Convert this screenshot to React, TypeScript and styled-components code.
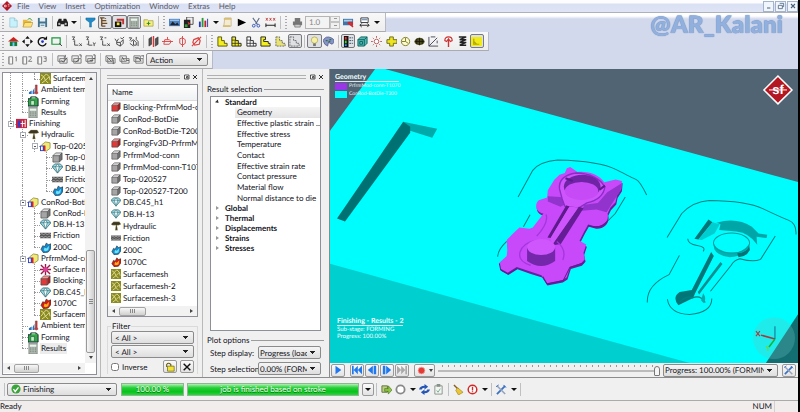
import React from 'react';
import styled, { createGlobalStyle, css } from 'styled-components';

const GlobalStyle = createGlobalStyle`
  *, *::before, *::after { box-sizing: border-box; }
  html, body, #root { height: 100%; }
  body {
    margin: 0;
    background: #f0f0f0;
    color: #14141c;
    font: 8px/10px Lato, "Open Sans", sans-serif;
    text-rendering: geometricPrecision;
    overflow: hidden;
  }
  button, select, input { font: inherit; color: inherit; margin: 0; text-rendering: inherit; }
  ul { list-style: none; margin: 0; padding: 0; }
`;

/* ---------- icons ---------- */

const cube = (top: string, front: string, side: string) => (
  <>
    <path d="M1 4l3-3h7l-3 3z" fill={top} />
    <path d="M1 4h7v7H1z" fill={front} />
    <path d="M8 4l3-3v7l-3 3z" fill={side} />
    <path d="M1 4l3-3h7v7l-3 3H1zM1 4h7v7M8 4l3-3" fill="none" stroke="#444" strokeWidth=".7" />
  </>
);

const die = (top: string) => (
  <>
    <path d="M2 4l4-3 5 1v6l-4 3-5-1z" fill={top} stroke="#77721c" strokeWidth=".7" />
    <path d="M0 5h5v6H0z" fill="#2b3fc8" />
    <path d="M1 6h2v4H1z" fill="#fff" />
    <path d="M4 5h2v6H4z" fill="#d2262c" />
  </>
);

const flame = (a: string, b: string) => (
  <>
    <path d="M1 8l2-4 2 1 2-4 2 2 3-1v5l-3 4-5 1z" fill={a} stroke="#222" strokeWidth=".6" />
    <path d="M4 9l1-3 2 1 3-3-1 5-3 1z" fill={b} />
  </>
);

const stairs = (fill: string, stroke: string, grid?: boolean) => (
  <>
    <path d="M1 1h4v4h3v3h3v3H1z" fill={fill} stroke={stroke} />
    {grid && <path d="M1 4.500h4M1 8h7M4.500 5v6M8 8v3" stroke={stroke} strokeWidth=".8" />}
  </>
);

const axes = (a: string, b: string) => (
  <>
    <path d="M1 1h3L2 4h2M4 5v5h4" fill="none" stroke="#333" strokeWidth=".9" />
    <path d={a} fill="none" stroke="#333" strokeWidth=".9" />
    <path d={b} fill="none" stroke="#333" strokeWidth=".9" />
  </>
);

const pane = (mark: string) => (
  <>
    <path d="M1 3h4v8H1zM1 3v8M5 3v8" fill="#f6f6f6" stroke="#888" />
    <path d={mark} fill="none" stroke="#777" />
  </>
);

const stack = (mark: string) => (
  <>
    <path d="M1 2h7v6H1zM3 5h8v5H3z" fill="#eee" stroke="#777" />
    <path d={mark} fill="none" stroke="#555" />
  </>
);

const glyphs: Record<string, React.ReactNode> = {
  file: <path d="M2 1h5l3 3v7H2zM7 1v3h3" fill="#c8f2fb" stroke="#8fc4d4" strokeWidth=".8" />,
  open: <><path d="M1 3h4l1 1h4v7H1z" fill="#e8b93c" /><path d="M3 6h9l-2 5H1z" fill="#ffe27a" stroke="#a98222" strokeWidth=".6" /><path d="M6 3q3-3 5 1" fill="none" stroke="#3a9a3a" /></>,
  save: <><path d="M1 1h10v10H1z" fill="#43758e" /><path d="M3 1h6v4H3zM3 7h6v4H3z" fill="#e5eff4" /><path d="M4 9h4" stroke="#43758e" /></>,
  find: <><path d="M2 2h3v2h2V2h3l2 4v4H8V8H4v2H0V6z" fill="#222" /><circle cx="2.500" cy="7.500" r="1.200" fill="#bbb" /><circle cx="9.500" cy="7.500" r="1.200" fill="#bbb" /></>,
  filter: <path d="M1 1h10v2L7 6v5H5V6L1 3z" fill="#1f8cc9" stroke="#0c5f92" strokeWidth=".5" />,
  tree: <path d="M1 1h5M3 1v9M3 4h5M3 7h6M3 10h4M7 1v1" stroke="#6d4a22" strokeWidth="1.500" />,
  objects: <><path d="M1 5h7v6H1z" fill="#111" /><path d="M3 2h8v6H9V4H3z" fill="#c03030" /><path d="M3 6h3v3H3z" fill="#f3e23a" /></>,
  calc: <><path d="M1 0h9v12H1z" fill="#b4bab4" stroke="#6c7a70" strokeWidth=".8" /><path d="M2 2h7v2H2z" fill="#e8f7ea" /><path d="M3 5v6M5.500 5v6M8 5v6" stroke="#55725c" strokeDasharray="1 1" /></>,
  folderAdd: <><path d="M1 3h4l1 1h5v6H1z" fill="#f5ee7c" stroke="#9a9434" strokeWidth=".7" /><path d="M6 5v4M4 7h4" stroke="#258a25" /></>,
  picture: <><path d="M0 2h12v8H0z" fill="#4d82c4" /><path d="M1 9l3-4 3 3 2-2 2 3z" fill="#222" /><path d="M1 3h10v1H1z" fill="#bfe0f7" /></>,
  layers: <><path d="M4 0h7v8H4z" fill="#eee" stroke="#222" strokeWidth=".8" /><path d="M1 3h7v9H1z" fill="#222" /><path d="M2 8h3v3H2z" fill="#35a035" /><path d="M5 5l3 2-2 2z" fill="#d33" /></>,
  chart: <><path d="M1 5h2v6H1z" fill="#2338c0" /><path d="M4 1h2v10H4z" fill="#2a9a3a" /><path d="M7 4h2v7H7z" fill="#c02323" /><path d="M10 2h1v9h-1z" fill="#2338c0" /></>,
  scroll: <><path d="M3 1h7v9H2z" fill="#f4ecd2" stroke="#b5a774" strokeWidth=".7" /><path d="M2 1h8v2H2zM1 9h8v2H1z" fill="#d9bd70" /></>,
  run: <path d="M2 2l9 4-9 4z" fill="#000" />,
  cut: <><path d="M2 1l5 7M9 1L5 8" stroke="#5a6b88" strokeWidth="1.200" /><circle cx="3" cy="9.500" r="1.500" fill="none" stroke="#2d4fc0" /><circle cx="8" cy="9.500" r="1.500" fill="none" stroke="#2d4fc0" /></>,
  measure: <><path d="M1 7v4M11 7v4M1 9h10" stroke="#111" /><path d="M1 1l2 3M3 1L1 4M5 1l2 3M7 1L5 4M9 1l2 3M11 1L9 4" stroke="#b22" strokeWidth=".8" /></>,
  print: <><path d="M3 1h6v4H3zM1 5h10v4H1z" fill="#777" /><path d="M3 8h6v3H3z" fill="#ccc" stroke="#666" strokeWidth=".7" /></>,
  snapshot: <><path d="M0 2h11v7H0z" fill="#3f75a8" /><path d="M1 3h9v2H1z" fill="#a8d0ee" /><path d="M5 6l6 5M6 6h4v4" stroke="#d22" strokeWidth="1.500" fill="none" /></>,
  fit: <><path d="M2 1h8v5H2z" fill="#fff" stroke="#333" /><path d="M3 3h6" stroke="#3a6fb0" /><path d="M1 9h10M3 7L1 9l2 2M9 7l2 2-2 2" stroke="#222" fill="none" /></>,
  home: <><path d="M0 6l6-5 6 5z" fill="#d02020" /><path d="M2 6h8v5H2z" fill="#167a3a" /><path d="M5 7h2v4H5z" fill="#7cf" /></>,
  move: <path d="M6 0l2.500 3h-5zM6 12l2.500-3h-5zM0 6l3-2.500v5zM12 6L9 3.500v5z" fill="#111" />,
  rotate: <><path d="M9 3a4.500 4.500 0 1 0 1 5" fill="none" stroke="#111" strokeWidth="1.500" /><path d="M7 4h4V0z" fill="#111" /><circle cx="6" cy="6" r="1.500" fill="#23c" /></>,
  zoomBox: <><path d="M1 2h9v7H1z" fill="none" stroke="#169a3a" strokeWidth="1.300" /><path d="M9 8l3 3" stroke="#333" /></>,
  zx: axes('M9 8l3 3M12 8L9 11', 'M4 5l-1 1'),
  zy: axes('M9 7l1 2 2-2M10 9v2', 'M2 9h1'),
  yx: axes('M9 8l3 3M12 8L9 11', 'M6 2h2'),
  iso: <path d="M1 3l2 3 2-3M3 6v3l4 2 3-3V4L7 7H3M7 7v4M7 2l2 1 2-2" fill="none" stroke="#444" />,
  isoAlt: <path d="M1 2h3L2 5M3 6l3-2 3 3v3H6V5M9 1v3l2 2v5M2 8l4 3" fill="none" stroke="#444" />,
  mirror: <><path d="M1 3l3-2v8l-3 2zM8 3l3-2v8l-3 2z" fill="#555" stroke="#222" strokeWidth=".6" /><path d="M6 0v12" stroke="#d33" strokeWidth="1.500" /></>,
  planeX: <path d="M0 6h12M3 4h5l2 2-2 3H2zM6 1v3" fill="none" stroke="#d94444" />,
  planeY: <path d="M6 0v12M3 3l3-1 3 2v4L6 10 3 8z" fill="none" stroke="#d94444" />,
  planeZ: <path d="M1 11L11 1M3 4l5-2 2 3-1 4-5 1-2-3z" fill="none" stroke="#d94444" strokeWidth="1.300" />,
  stairsSolid: stairs('#f3ee1e', '#55510d'),
  stairsGrid: stairs('#f3ee1e', '#222', true),
  stairsWire: stairs('#fff', '#222', true),
  stairsBlock: <path d="M1 1h5v3H4v2h5v2h2v3H1z" fill="#f3ee1e" stroke="#222" />,
  stairsDash: <path d="M1 1h4v4h3v3h3v3H1z" fill="#e8e374" stroke="#666" strokeDasharray="2 1" />,
  outline: <path d="M1 1h4v4h3v3h3v3H1z" fill="none" stroke="#666" strokeDasharray="2 1" />,
  bulb: <><circle cx="6" cy="4.500" r="3.500" fill="#f7f0a2" stroke="#a89b45" strokeWidth=".7" /><path d="M4.500 8h3v3h-3z" fill="#777" /></>,
  palette: <><path d="M0 5q3-6 9-3t1 7L6 7l-1 4-3-2z" fill="#8795c6" stroke="#37457c" strokeWidth=".7" /><path d="M3 5h2M7 4h2M6 6h2" stroke="#356c50" strokeWidth="1.500" /></>,
  legend: <><path d="M1 0h5v12H1z" fill="#111" /><path d="M2 1h2v3H2z" fill="#e33" /><path d="M2 5h2v3H2z" fill="#3d3" /><path d="M2 9h2v2H2z" fill="#39f" /><path d="M7 2h4M7 5h4M7 8h4" stroke="#246" strokeDasharray="2 1" /></>,
  cubeGreen: <><path d="M1 4l3-3h7v7l-3 3H1z" fill="#53b7b1" stroke="#0b6560" /><path d="M1 4h7v7M8 4l3-3M3 6h3v3H3z" fill="none" stroke="#0b6560" /></>,
  sun: <><circle cx="6" cy="6" r="2.500" fill="#fff" stroke="#a33" strokeWidth=".8" /><path d="M6 0v2M6 10v2M0 6h2M10 6h2M2 2l1 1M9 9l1 1M10 2L9 3M3 9l-1 1" stroke="#a33" strokeWidth=".8" /></>,
  pipe: <path d="M1 4h3V1h4v3h4v4H8v3H4V8H1z" fill="#eee51e" stroke="#5e5a10" strokeWidth=".9" />,
  clock: <><circle cx="6" cy="6" r="4.500" fill="#fbfbd0" stroke="#7d7b20" /><path d="M6 2v4l3 2M2 6h4" stroke="#7d7b20" fill="none" /></>,
  ball: <><ellipse cx="6" cy="6" rx="5.500" ry="4" fill="#4c4a18" /><path d="M1 6h10M6 2v8M3 3v6M9 3v6" stroke="#111" strokeWidth=".8" /></>,
  vector: <path d="M1 1v10h10M1 11L10 2M3 1h5M10 5v3" fill="none" stroke="#445" />,
  tool: <><path d="M2 5q0-4 4-4t4 4L8 6 6 3 4 6z" fill="#fff" stroke="#c33" strokeWidth="1.300" /><path d="M6 4v8" stroke="#c33" strokeWidth="1.500" /></>,
  coil: <path d="M2 1h8L3 4h7L3 7h7l-7 3h7" fill="none" stroke="#222" strokeWidth="1.600" />,
  mesh: <><path d="M0 1h12v10H0z" fill="#f0ea18" /><path d="M3 3v6h6M3 6l3 3" fill="none" stroke="#b0a60c" strokeWidth="1.300" /></>,
  pane1: pane('M8 4l1-1v5'),
  pane2: pane('M7 3h3v2L7 8h4'),
  pane3: pane('M7 3h3v5H7M8 5h2'),
  stack1: stack('M9 1v3M5 7l2 2 4-5'),
  stack2: stack('M9 1h2v3M5 9l4-3'),
  stack3: stack('M9 1h2v4H9M5 7h4'),
  group1: stack('M2 3l5 5M9 6v5'),
  group2: stack('M3 3l3 4M8 7h3'),
  group3: stack('M2 4h4l3 4M9 2h3v3'),
  surf: <><path d="M0 0h12v12H0z" fill="#8a8a22" /><path d="M1 2l3 2 3-3 3 3M1 8l3-4 2 4 4-4 1 4M2 11l4-3 3 3" fill="none" stroke="#e6e39c" /></>,
  temp: <><path d="M1 9l3-2v4H1zM5 8l2-4v7H5z" fill="#2c70b8" /><path d="M8 1h2v7l1 2-2 1-2-1 1-2z" fill="#d33" stroke="#333" strokeWidth=".4" /></>,
  form: <><path d="M0 3h3V1h6l2 2v8H0z" fill="#35a547" stroke="#123" /><path d="M3 5h4v5H3z" fill="#bff0c0" stroke="#143" strokeWidth=".6" /><path d="M4 2h4" stroke="#bff0c0" /></>,
  process: <><path d="M0 1h12v10H0z" fill="#d0213c" /><path d="M2 3h3v7H2z" fill="#2b3fc8" /><path d="M7 3v7M10 2v8M5 6h5" stroke="#fff" /></>,
  press: <path d="M0 4l3-3h7l2 3-3 1H7l1 6H5l1-6H2z" fill="#3b3524" stroke="#c6bb7a" strokeWidth=".4" />,
  dieYellow: die('#efe97a'),
  cube: cube('#ddd', '#a5a5a5', '#737373'),
  cubeRed: cube('#f09a9a', '#e03a3a', '#a82020'),
  gem: <><path d="M0 4l3-3h6l3 3-6 7z" fill="#9fd8e0" stroke="#24616c" strokeWidth=".8" /><path d="M0 4h12M4 4l2 7 2-7-2-3z" fill="#f6ffff" stroke="#24616c" strokeWidth=".6" /></>,
  friction: <><path d="M0 3h12v6H0z" fill="#555" /><path d="M0 5l2-1 2 1 2-1 2 1 2-1 2 1M0 8l2-1 2 1 2-1 2 1 2-1 2 1" fill="none" stroke="#ccc" strokeWidth=".7" /></>,
  cold: flame('#1687c8', '#6fe3ff'),
  hot: flame('#cf1f12', '#ffb21e'),
  meshRed: <><path d="M1 1l10 10M11 1L1 11M6 0v12M0 6h12" stroke="#a01848" strokeWidth="1.500" /><circle cx="6" cy="6" r="2.500" fill="#d8409a" /></>,
  unlock: <><path d="M2 6V3q2-3 5 0v2" fill="none" stroke="#665c0a" strokeWidth="1.300" /><path d="M3 5h8v6H3z" fill="#f3e438" stroke="#665c0a" strokeWidth=".8" /></>,
  close: <path d="M2 2l8 8M10 2l-8 8" stroke="#111" strokeWidth="1.700" />,
  play: <path d="M3 1l7 5-7 5z" fill="#1e78f0" />,
  first: <path d="M0 1h2v10H0zM7 1v10L2 6zM12 1v10L7 6z" fill="#1e78f0" />,
  back: <path d="M7 1v10L1 6zM8 1h3v10H8z" fill="#1e78f0" />,
  next: <path d="M5 1v10l6-5zM1 1h3v10H1z" fill="#1e78f0" />,
  last: <path d="M10 1h2v10h-2zM0 1v10l5-5zM5 1v10l5-5z" fill="#a9a9a9" />,
  record: <circle cx="6" cy="6" r="4.500" fill="#e23a34" stroke="#f5a39e" />,
  tools: <><path d="M1 11l9-9" stroke="#3c72c4" strokeWidth="2" /><path d="M1 2l9 9" stroke="#93a3ba" strokeWidth="1.600" /><path d="M8 1l3 3M0 3l3-2" stroke="#3c72c4" /></>,
  docRun: <><path d="M1 2h6v7H1z" fill="#b9cf85" stroke="#60713a" /><path d="M4 5h4V2l4 4.500L8 11V8H4z" fill="#8cc63c" stroke="#3d661b" strokeWidth=".6" /></>,
  stop: <circle cx="6" cy="6" r="4.500" fill="#fff" stroke="#888" strokeWidth="2" />,
  refresh: <path d="M0 6q1-4 6-4V0l4 3-4 3V4Q3 4 3 6zM12 6q-1 4-6 4v2L2 9l4-3v2q3 0 3-2z" fill="#2456b8" />,
  clip: <><path d="M2 2h8v9H2z" fill="#f2f5f0" stroke="#88908a" /><path d="M4 0h4v3H4z" fill="#88908a" /><path d="M4 7l1.500 2L8 5" fill="none" stroke="#7a9" /></>,
  broom: <><path d="M1 1l5 5" stroke="#8a5a1c" strokeWidth="1.500" /><path d="M5 4l6 5-5 3-3-5z" fill="#eac634" stroke="#907514" strokeWidth=".6" /></>,
  alert: <><circle cx="6" cy="6" r="4.700" fill="#fff" stroke="#cf2a2a" strokeWidth="1.600" /><path d="M6 3v4M6 8v1" stroke="#cf2a2a" strokeWidth="1.500" /></>,
  ok: <><circle cx="6" cy="6" r="5.500" fill="#3aa33a" /><path d="M3 6l2 3 4-5" fill="none" stroke="#fff" strokeWidth="1.600" /></>,
  min: <path d="M3 9h5" stroke="#47607a" strokeWidth="1.500" />,
  restore: <path d="M4 2h6v5H8M2 5h6v5H2z" fill="none" stroke="#47607a" strokeWidth="1.200" />,
  exit: <path d="M3 3l6 6M9 3L3 9" stroke="#47607a" strokeWidth="1.600" />,
  float: <path d="M1 2h9v8H1zM5 5h3v3H5z" fill="#fff" stroke="#222" strokeWidth="1.500" />,
  diamond: <><path d="M6 0l6 6-6 6-6-6z" fill="#b01624" /><path d="M3 5h2v2H3zM7 4h2M7 6h2" stroke="#fff" strokeWidth=".8" fill="none" /></>,
};

const Svg = styled.svg<{ $s?: number }>`
  display: block;
  flex: none;
  width: ${p => p.$s ?? 10}px;
  height: ${p => p.$s ?? 10}px;
`;
const Icon = ({ name, size }: { name: string; size?: number }) => (
  <Svg $s={size} viewBox="0 0 12 12" aria-hidden="true">{glyphs[name]}</Svg>
);

/* ---------- shared controls ---------- */

const Shell = styled.div`
  display: grid;
  grid-template-rows: auto auto minmax(0, 1fr) auto auto;
  height: 100vh;
  border-right: 2px solid #000;
`;

const ToolButton = styled.button<{ $on?: boolean }>`
  display: flex;
  align-items: center;
  justify-content: center;
  min-width: 0;
  height: 14px;
  padding: 0;
  border: 1px solid transparent;
  border-radius: 2px;
  background: none;
  ${p => p.$on && css`border-color: #77797e; background: #e0e1e4;`}
`;

const Caret = styled.button`
  width: 9px;
  height: 12px;
  padding: 0;
  border: 0;
  background: none;
  display: grid;
  place-items: center;
  &::before {
    content: '';
    border: 3px solid transparent;
    border-top-color: #111;
    border-bottom: 0;
  }
`;

const Rule = styled.span`
  width: 1px;
  height: 13px;
  margin: 0 2px;
  background: #bfc0c4;
`;

const Grip = styled.span`
  width: 2px;
  height: 13px;
  margin: 0 2px;
  background: repeating-linear-gradient(#a8aab0 0 1px, transparent 1px 3px);
`;

const Group = styled.div<{ $w: number }>`
  display: grid;
  grid-auto-flow: column;
  grid-auto-columns: 1fr;
  width: ${p => p.$w}px;
`;

const Select = styled.select`
  appearance: none;
  min-width: 0;
  height: 13px;
  padding: 0 13px 0 3px;
  border: 1px solid #8b8b8b;
  border-radius: 2px;
  line-height: 10px;
  text-overflow: clip;
  background:
    linear-gradient(#222, #222) right 5px top 4px / 5px 1px no-repeat,
    linear-gradient(#222, #222) right 6px top 5px / 3px 1px no-repeat,
    linear-gradient(#222, #222) right 7px top 6px / 1px 1px no-repeat,
    linear-gradient(#f5f5f5, #dedede);
`;

const Tools = ({ w, items }: { w: number; items: string[] }) => (
  <Group $w={w}>
    {items.map(item => {
      const on = item.endsWith('*');
      const name = on ? item.slice(0, -1) : item;
      return <ToolButton key={name} $on={on} aria-label={name}><Icon name={name} size={11} /></ToolButton>;
    })}
  </Group>
);

/* ---------- menu ---------- */

const MenuBar = styled.nav`
  display: flex;
  align-items: center;
  gap: 9px;
  height: 13px;
  padding-left: 2px;
  color: #5d5d68;
  background: linear-gradient(#fdfdff 0 3px, #d9e0f3 4px, #dfe5f6);
  border-bottom: 1px solid #aeb1ba;
`;
const MenuItem = styled.button`
  padding: 0;
  border: 0;
  background: none;
  line-height: 11px;
  &:first-of-type { margin-left: -4px; }
`;
const WindowButtons = styled.div`
  display: flex;
  gap: 1px;
  margin-left: auto;
`;
const WindowButton = styled.button`
  display: grid;
  place-items: center;
  width: 11px;
  height: 11px;
  padding: 0;
  border: 1px solid #a4b4cc;
  background: #f1f6fd;
`;

/* ---------- toolbars ---------- */

const ToolbarArea = styled.header`
  position: relative;
  display: flex;
  flex-direction: column;
  align-items: flex-start;
  background: linear-gradient(#fff, #fff 3px, #d3d9ed 6px);
`;
const Toolbar = styled.div<{ $h: number }>`
  display: flex;
  align-items: center;
  height: ${p => p.$h}px;
  padding-right: 4px;
  background: linear-gradient(#f8f8f8, #ededee);
  border-right: 1px solid #b6bac6;
  border-bottom: 1px solid #a9abb1;
`;
const Watermark = styled.div`
  position: absolute;
  top: -1px;
  right: 15px;
  font: 800 24px/26px Lato, "Open Sans", sans-serif;
  color: #92b0de;
  text-shadow: 0 0 1px #5578ad;
`;
const Spin = styled.input`
  width: 25px;
  height: 13px;
  padding: 0 3px;
  border: 1px solid #b5b5b5;
  background: #f3f3f3;
  color: #888;
`;
const SpinArrows = styled.span`
  display: grid;
  width: 10px;
  height: 13px;
  button {
    padding: 0;
    border: 1px solid #c4c4c4;
    background: #f0f0f0;
    display: grid;
    place-items: center;
  }
  button::before { content: ''; width: 3px; height: 1px; background: #999; }
`;
const ActionSelect = styled(Select)` width: 62px; `;

/* ---------- docks ---------- */

const Work = styled.main`
  display: grid;
  grid-template-columns: 100px 102px 128px minmax(0, 1fr);
  min-height: 0;
  border-bottom: 1px solid #8c8c8c;
`;
const TreeDock = styled.section`
  display: grid;
  grid-template: minmax(0, 1fr) 11px / minmax(0, 1fr) 11px;
  margin: 3px 3px 2px 2px;
  border: 1px solid #8d9096;
  background: #fff;
  overflow: hidden;
`;
const TreeList = styled.ul`
  display: flex;
  flex-direction: column;
  padding-bottom: 9px;
  min-width: 0;
`;
const TreeRow = styled.li`
  flex: 1;
  display: flex;
  align-items: stretch;
  min-height: 0;
  padding-left: 1px;
  overflow: hidden;
  > svg { align-self: center; margin: 0 1px 0 0; }
`;
const Guide = styled.span<{ $k: string }>`
  position: relative;
  flex: none;
  width: 12px;
  &::before {
    content: '';
    position: absolute;
    left: 6px;
    top: 0;
    height: ${p => (p.$k === 'L' ? '50%' : '100%')};
    border-left: ${p => (p.$k === ' ' ? '0' : '1px dotted #9a9a9a')};
  }
  &::after {
    content: '';
    position: absolute;
    left: 6px;
    right: 0;
    top: 50%;
    border-top: ${p => ('LTE'.includes(p.$k) ? '1px dotted #9a9a9a' : '0')};
  }
`;
const Expander = styled.button`
  position: absolute;
  z-index: 1;
  left: 4px;
  top: 3px;
  width: 6px;
  height: 6px;
  padding: 0;
  border: 1px solid #a9aeb8;
  background: linear-gradient(#555, #555) center / 2px 1px no-repeat, #fff;
`;
const TreeLabel = styled.span<{ $sel?: boolean }>`
  align-self: center;
  padding: 0 1px;
  line-height: 11px;
  white-space: nowrap;
  background: ${p => (p.$sel ? '#ececec' : 'none')};
`;

const VScroll = styled.div`
  display: flex;
  flex-direction: column;
  align-items: center;
  justify-content: space-between;
  padding: 4px 0;
  background: #f2f2f2;
`;
const VThumb = styled.span`
  width: 9px;
  height: 103px;
  margin: auto 0 3px;
  border: 1px solid #999;
  border-radius: 2px;
  background: repeating-linear-gradient(#888 0 1px, transparent 1px 2px) center / 4px 5px no-repeat,
    linear-gradient(90deg, #f7f7f7, #cfcfcf);
`;
const HScroll = styled.div<{ $t: number }>`
  flex: none;
  display: flex;
  align-items: center;
  height: 10px;
  padding: 0 4px;
  background: #f2f2f2;
  span {
    width: ${p => p.$t}px;
    height: 9px;
    margin: 0 auto 0 4px;
    border: 1px solid #a3a3a3;
    border-radius: 2px;
    background: repeating-linear-gradient(90deg, #888 0 1px, transparent 1px 2px) center / 5px 4px no-repeat,
      linear-gradient(#f7f7f7, #d0d0d0);
  }
`;
const Arrow = styled.i<{ $d: 'up' | 'down' | 'left' | 'right' }>`
  border: 2px solid transparent;
  ${p => ({
    up: 'border-bottom: 3px solid #444; border-top: 0;',
    down: 'border-top: 3px solid #444; border-bottom: 0;',
    left: 'border-right: 3px solid #444; border-left: 0;',
    right: 'border-left: 3px solid #444; border-right: 0;',
  })[p.$d]}
`;

const Dock = styled.section`
  display: flex;
  flex-direction: column;
  min-width: 0;
  min-height: 0;
  padding: 4px 4px 3px 6px;
  border-left: 1px solid #b9b9b9;
`;
const DockTitle = styled.div`
  flex: none;
  display: flex;
  align-items: center;
  gap: 2px;
  height: 7px;
  &::before {
    content: '';
    flex: 1;
    height: 4px;
    margin-right: 2px;
    border: solid #b0b0b0;
    border-width: 1px 0;
  }
  button { padding: 0; border: 0; background: none; }
`;
const ListBox = styled.div`
  flex: 1;
  display: flex;
  flex-direction: column;
  min-height: 0;
  margin-top: 4px;
  border: 1px solid #8d9096;
  background: #fff;
`;
const ListTable = styled.table`
  flex: 1;
  display: flex;
  flex-direction: column;
  min-height: 0;
  overflow: hidden;
  thead { display: block; }
  thead tr { display: block; }
  th {
    display: block;
    padding: 0 4px;
    text-align: left;
    font-weight: 400;
    line-height: 15px;
    background: linear-gradient(#fff, #f0f1f3);
    border-bottom: 1px solid #dcdcdc;
  }
  tbody { flex: 1; display: flex; flex-direction: column; padding-bottom: 2px; }
  tbody tr { flex: 1; display: flex; align-items: center; }
  td { display: flex; align-items: center; gap: 2px; padding: 0 0 0 3px; white-space: nowrap; line-height: 10px; }
`;
const FilterBox = styled.fieldset`
  flex: none;
  display: flex;
  flex-direction: column;
  gap: 1px;
  margin: 4px 0 0;
  min-width: 0;
  padding: 0 3px;
  border: 1px solid #dadada;
  border-bottom: 0;
  legend { padding: 0 1px; line-height: 10px; }
`;
const FilterFoot = styled.div`
  display: flex;
  align-items: center;
  gap: 3px;
  height: 15px;
  label { display: flex; align-items: center; gap: 3px; margin-right: auto; }
  input { width: 8px; height: 8px; }
`;
const SmallButton = styled.button<{ $w?: number }>`
  flex: none;
  display: grid;
  grid-auto-flow: column;
  place-items: center;
  width: ${p => p.$w ?? 14}px;
  height: 13px;
  padding: 0;
  border: 1px solid #999;
  border-radius: 2px;
  background: linear-gradient(#fafafa, #e2e2e2);
`;

const Caption = styled.h2`
  flex: none;
  display: flex;
  align-items: center;
  gap: 2px;
  margin: 0;
  font: inherit;
  line-height: 10px;
  &::after { content: ''; flex: 1; height: 1px; background: #9c9c9c; }
`;
const ResultDock = styled(Dock)`
  padding: 4px 5px 2px 4px;
  border-right: 1px solid #8b8b8b;
  ${Caption} { margin-top: 4px; }
`;
const ResultBox = styled.div`
  flex: 1;
  min-height: 0;
  margin: 2px 3px 0;
  border: 1px solid #8d9096;
  background: #fff;
  overflow: hidden;
`;
const Branches = styled.ul<{ $h: number }>`
  display: flex;
  flex-direction: column;
  height: ${p => p.$h}px;
`;
const Branch = styled.li<{ $open?: boolean }>`
  flex: 1;
  display: flex;
  align-items: center;
  gap: 5px;
  padding-left: 5px;
  font-weight: 700;
  &::before {
    content: '';
    border: 2px solid transparent;
    border-left: 3px solid ${p => (p.$open ? '#333' : '#999')};
    border-right: 0;
    transform: ${p => (p.$open ? 'rotate(45deg)' : 'none')};
    margin-right: 1px;
  }
`;
const Leaf = styled.li<{ $sel?: boolean }>`
  flex: 1;
  display: flex;
  align-items: center;
  margin-left: 24px;
  padding-left: 2px;
  white-space: nowrap;
  background: ${p => (p.$sel ? 'linear-gradient(#f5f5f5, #e4e4e4)' : 'none')};
`;
const Plot = styled.div`
  flex: none;
  display: grid;
  grid-template-columns: 47px minmax(0, 1fr);
  align-items: center;
  gap: 3px 1px;
  padding: 1px 3px 0;
  white-space: nowrap;
  select { padding-left: 1px; }
`;

/* ---------- viewer ---------- */

const Viewer = styled.section`
  display: grid;
  grid-template-rows: minmax(0, 1fr) 14px;
  min-width: 0;
  min-height: 0;
`;
const Scene = styled.div`
  position: relative;
  min-height: 0;
  background: #506473;
  color: #f2ffff;
  font-size: 6px;
  line-height: 7px;
  overflow: hidden;
`;
const Drawing = styled.svg`
  position: absolute;
  inset: 0;
  width: 100%;
  height: 100%;
`;
const Legend = styled.div`
  position: absolute;
  top: 4px;
  left: 5px;
  strong { display: block; width: 64px; font-size: 7px; line-height: 8px; border-bottom: 1px solid #dfe7ea; }
  span { display: flex; align-items: center; gap: 2px; font-size: 5px; line-height: 8px; color: #e9f3f6; }
`;
const Swatch = styled.i<{ $c: string }>`
  width: 12px;
  height: 7px;
  background: ${p => p.$c};
`;
const StageInfo = styled.div`
  position: absolute;
  left: 7px;
  bottom: 23px;
  strong { display: block; line-height: 8px; font-size: 7px; font-weight: 700; border-bottom: 1px solid #d8ffff; }
  span { display: block; font-size: 6px; line-height: 7px; }
`;
const Player = styled.div`
  display: flex;
  align-items: center;
  gap: 1px;
  padding: 0 2px 0 1px;
`;
const Slider = styled.div`
  flex: 1;
  min-width: 0;
  margin: 0 2px;
  padding-top: 2px;
  background: repeating-linear-gradient(90deg, #9a9a9a 0 1px, transparent 1px 6px) 4px 1px / calc(100% - 8px) 2px no-repeat;
  input {
    appearance: none;
    display: block;
    width: 100%;
    height: 11px;
    background: linear-gradient(#bbb, #bbb) center / 100% 2px no-repeat;
  }
  input::-webkit-slider-thumb {
    appearance: none;
    width: 6px;
    height: 10px;
    border: 1px solid #777;
    border-radius: 3px 3px 1px 1px;
    background: #f5f5f5;
  }
`;
const ProgressSelect = styled(Select)` width: 115px; margin-right: 3px; padding-left: 1px; `;
const PlayGap = styled.span` width: 3px; `;

/* ---------- job bar and status ---------- */

const JobBar = styled.footer`
  display: flex;
  align-items: center;
  height: 23px;
  padding: 0 0 0 2px;
  border-bottom: 1px solid #aaa;
`;
const JobName = styled.label`
  position: relative;
  display: grid;
  align-items: center;
  width: 110px;
  margin: 0 4px 0 0;
  svg { position: absolute; left: 4px; }
  select { padding-left: 15px; }
`;
const Bar = styled.div<{ $w: number }>`
  width: ${p => p.$w}px;
  height: 13px;
  margin-right: 3px;
  border: 1px solid #8fb593;
  text-align: center;
  line-height: 11px;
  color: #eaffea;
  text-shadow: 0 1px 0 #14701c;
  background: linear-gradient(#b4f0b8, #25cf36 35%, #08c21c 70%, #2ad53c);
`;
const Status = styled.div`
  display: flex;
  justify-content: space-between;
  height: 11px;
  padding: 0 23px 0 0;
  line-height: 11px;
  background: #f1eded;
  span + span { padding: 0 2px; border-right: 1px solid #d5d0d0; }
`;

/* ---------- data ---------- */

const tree: [string, string, string][] = [
  ['||L', 'surf', 'Surfacemesh'],
  ['|T', 'temp', 'Ambient temperature'],
  ['|T', 'form', 'Forming'],
  ['|L', 'calc', 'Results'],
  ['E', 'process', 'Finishing'],
  [' E', 'press', 'Hydraulic'],
  [' |E', 'dieYellow', 'Top-020527'],
  [' | T', 'cube', 'Top-020527'],
  [' | T', 'gem', 'DB.H-13'],
  [' | T', 'friction', 'Friction'],
  [' | L', 'cold', '200C'],
  [' E', 'dieYellow', 'ConRod-BotDie'],
  [' |T', 'cube', 'ConRod-BotDie'],
  [' |T', 'gem', 'DB.H-13'],
  [' |T', 'friction', 'Friction'],
  [' |L', 'cold', '200C'],
  [' E', 'dieYellow', 'PrfrmMod-conn'],
  [' |T', 'meshRed', 'Surface mesh'],
  [' |T', 'cubeRed', 'Blocking-PrfrmMod'],
  [' |T', 'gem', 'DB.C45_h1'],
  [' |T', 'hot', '1070C'],
  [' |L', 'surf', 'Surfacemesh'],
  [' T', 'temp', 'Ambient temperature'],
  [' T', 'form', 'Forming'],
  [' L', 'calc', 'Results'],
];

const objects: [string, string][] = [
  ['cubeRed', 'Blocking-PrfrmMod-c...'],
  ['cube', 'ConRod-BotDie'],
  ['cube', 'ConRod-BotDie-T200'],
  ['cubeRed', 'ForgingFv3D-PrfrmM...'],
  ['cube', 'PrfrmMod-conn'],
  ['cube', 'PrfrmMod-conn-T1070'],
  ['cube', 'Top-020527'],
  ['cube', 'Top-020527-T200'],
  ['gem', 'DB.C45_h1'],
  ['gem', 'DB.H-13'],
  ['press', 'Hydraulic'],
  ['friction', 'Friction'],
  ['cold', '200C'],
  ['hot', '1070C'],
  ['surf', 'Surfacemesh'],
  ['surf', 'Surfacemesh-2'],
  ['surf', 'Surfacemesh-3'],
];

const results = ['Geometry', 'Effective plastic strain ...', 'Effective stress', 'Temperature', 'Contact',
  'Effective strain rate', 'Contact pressure', 'Material flow', 'Normal distance to die'];
const categories = ['Global', 'Thermal', 'Displacements', 'Strains', 'Stresses'];

/* ---------- 3D scene ---------- */

const part = 'M256 100L262 86 272 82 294 97C330 94 358 106 374 128L408 120 427 124 425 148 412 168 408 188 392 205 384 222C390 246 368 264 345 260L326 255 314 276 300 304 320 315 312 340 316 360 305 372 272 382 262 414 248 423 202 432 186 408 150 396 112 383 85 400 64 388 60 370 82 350 84 330 82 302 98 285 120 264 150 268 160 264 192 222C170 218 163 196 178 182L203 174 205 152 225 120 240 105Z';

const Forging = () => (
  <Drawing viewBox="331 69 467 295" preserveAspectRatio="none" aria-label="Forging simulation">
    <path d="M331 131L376 69H386L798 182.500V364H331z" fill="#00fdfd" />
    <path d="M331 264.500L690 364H331z" fill="#00cfcf" />
    <path d="M798 315v49h-32z" fill="#126e70" />
    <path d="M404 122l34 7-5 9-22-7z" fill="#00a9aa" />
    <path d="M404 122l7 5v6l-65 89-8-3z" fill="#007173" />
    <g transform="translate(480 140) scale(.33333)" fill="none">
      <g stroke="#067f82" strokeWidth="3">
        <path d="M116 172L160 92Q180 66 234 61Q360 64 410 90T470 120T501 166" />
        <path d="M152 226L132 262M437 172L407 222 386 243M82 306Q56 330 55 352" />
        <path d="M562 294L606 222Q640 186 688 183Q800 184 850 208T925 242T948 285" />
        <path d="M886 290L842 360Q820 370 780 358Q762 362 754 378L692 456" />
        <path d="M599 348L568 406Q500 438 503 490M624 298Q624 314 652 318T670 336" />
        <path d="M563 480Q570 524 630 526Q696 520 696 478" />
      </g>
      <g transform="translate(2 7)"><path d={part} fill="#6a1fa0" /></g>
      <path d={part} fill="#c849fa" />
      <path d="M425 132l-2 20-14 22-28 44-30-8-46 4 10-18 40-6 28-32z" fill="#9133cc" />
      <path d="M205 170l38 2 22 18-22 12-38-16z" fill="#9133cc" />
      <path d="M240 148Q236 108 290 100Q352 102 376 142Q370 180 322 190L296 206 256 200 248 178z" fill="#ce54fb" stroke="#8c2cc6" strokeWidth="4" />
      <ellipse cx="308" cy="141" rx="55" ry="36" fill="#6f24a6" />
      <ellipse cx="306" cy="154" rx="50" ry="27" fill="#c64af5" />
      <path d="M258 116l22 8M360 150l16-12" stroke="#5e1b90" strokeWidth="6" />
      <path d="M260 198l10 3-56 95-10-2z" fill="#5d1a8a" />
      <path d="M298 202l14 4-68 108-28 4z" fill="#641d94" />
      <path d="M270 201l26 3-76 110-8-16z" fill="#ce54fb" />
      <path d="M172 302Q130 310 122 338T154 378M232 306Q262 330 250 362M200 225Q208 250 172 290" stroke="#a437dc" strokeWidth="4" />
      <path d="M143 325v40q42 30 84 0v-40z" fill="#7427ab" />
      <ellipse cx="185" cy="323" rx="42" ry="24" fill="#cf55fc" />
      <path d="M60 372l4 20 22 12 26-16M190 412l13 22 48-10 20-40 42-14M325 258q38 12 57-12" stroke="#601b90" strokeWidth="3" />
      <path d="M686 240l12 8-42 52-12-2z" fill="#007477" />
      <path d="M698 248l22 6-16 28-38 20-10-2z" fill="#00cdd0" />
      <path d="M686 240l24 10Q770 232 816 262L836 282 862 286 860 296 830 292 832 316Q808 280 770 276L718 272 722 254z" fill="#00a5a8" />
      <path d="M702 312q-6 34 48 42 58-6 58-40-20 28-56 26-42-6-50-28z" fill="#00b0b2" />
      <ellipse cx="755" cy="311" rx="54" ry="30" stroke="#079b9e" strokeWidth="3" />
      <path d="M772 342q30-2 36-24l2 14q-10 20-34 22z" fill="#007174" />
      <path d="M694 338l8 12-56 112-6 14-44 22q-20-24 4-40l36-6z" fill="#007679" />
      <path d="M722 368l6 6-60 78-10 14-4-8z" fill="#008f92" />
      <path d="M600 488q20-20 38-12 24-10 38 14" stroke="#007f82" strokeWidth="4" />
      <path d="M670 462q12 16 2 30l-8-8z" fill="#00aaac" />
    </g>
    <circle cx="774" cy="339" r="21" fill="#68c4c4" fillOpacity=".3" />
    <path d="M761 336l14 4" stroke="#a83a3a" strokeWidth="1.500" fill="none" />
    <path d="M756 332l4 5M760 332l-4 5" stroke="#a83a3a" fill="none" />
    <path d="M775 340v-13" stroke="#176a94" />
    <path d="M775 340l-6 8" stroke="#0bb52d" strokeWidth="1.500" fill="none" />
    <path d="M766 347l2 2v3" stroke="#7fd41d" fill="none" />
    <path d="M778 76l14 14-14 14-14-14z" fill="#b31722" stroke="#fff" strokeWidth="1.500" />
    <path d="M769 90h18" stroke="#fff" />
    <text x="778" y="94" textAnchor="middle" fill="#fff" fontFamily="Liberation Sans, sans-serif" fontSize="13" fontWeight="700">sf</text>
  </Drawing>
);

/* ---------- page ---------- */

export default function App() {
  return (
    <Shell>
      <GlobalStyle />
      <MenuBar>
        <Icon name="diamond" />
        {['File', 'View', 'Insert', 'Optimization', 'Window', 'Extras', 'Help'].map(m => <MenuItem key={m}>{m}</MenuItem>)}
        <WindowButtons>
          {['min', 'restore', 'exit'].map(n => <WindowButton key={n} aria-label={n}><Icon name={n} size={8} /></WindowButton>)}
        </WindowButtons>
      </MenuBar>

      <ToolbarArea>
        <Toolbar $h={19}>
          <Grip /><Tools w={44} items={['file', 'open', 'save']} />
          <Rule /><Tools w={14} items={['find']} /><Caret aria-label="Find options" />
          <Rule /><Tools w={73} items={['filter', 'tree*', 'objects*', 'calc*', 'folderAdd']} />
          <Rule /><Grip /><Tools w={44} items={['picture', 'layers', 'chart']} /><Caret aria-label="Chart options" />
          <Tools w={58} items={['scroll', 'run', 'cut', 'measure']} />
          <Rule /><Grip /><Tools w={16} items={['print']} />
          <Spin aria-label="Scale" defaultValue="1.0" />
          <SpinArrows><button aria-label="Increase" /><button aria-label="Decrease" /></SpinArrows>
          <Tools w={32} items={['snapshot', 'fit']} /><Caret aria-label="Fit options" />
        </Toolbar>
        <Toolbar $h={19}>
          <Grip /><Tools w={58} items={['home', 'move', 'rotate', 'zoomBox']} />
          <Rule /><Tools w={72} items={['zx', 'zy', 'yx', 'iso', 'isoAlt']} />
          <Rule /><Tools w={58} items={['mirror', 'planeX', 'planeY', 'planeZ']} />
          <Rule /><Grip /><Tools w={87} items={['stairsSolid', 'stairsGrid', 'stairsWire', 'stairsBlock', 'stairsDash', 'outline*']} />
          <Rule /><Tools w={29} items={['bulb*', 'palette']} />
          <Rule /><Tools w={143} items={['legend*', 'cubeGreen', 'sun', 'pipe', 'clock', 'ball', 'vector', 'tool', 'coil', 'mesh*']} />
        </Toolbar>
        <Toolbar $h={18}>
          <Grip /><Tools w={44} items={['pane1', 'pane2', 'pane3']} />
          <Rule /><Tools w={43} items={['stack1', 'stack2', 'stack3']} />
          <Rule /><Tools w={43} items={['group1', 'group2', 'group3']} />
          <ActionSelect aria-label="Action"><option>Action</option></ActionSelect>
        </Toolbar>
        <Watermark>@AR_Kalani</Watermark>
      </ToolbarArea>

      <Work>
        <TreeDock>
          <TreeList>
            {tree.map(([guides, icon, label], i) => (
              <TreeRow key={i}>
                {guides.split('').map((g, j) => (
                  <Guide key={j} $k={g}>{g === 'E' && <Expander aria-label={`Collapse ${label}`} />}</Guide>
                ))}
                <Icon name={icon} size={11} />
                <TreeLabel $sel={i === tree.length - 1}>{label}</TreeLabel>
              </TreeRow>
            ))}
          </TreeList>
          <VScroll><Arrow $d="up" /><VThumb /><Arrow $d="down" /></VScroll>
          <HScroll $t={25}><Arrow $d="left" /><span /><Arrow $d="right" /></HScroll>
        </TreeDock>

        <Dock>
          <DockTitle>
            <button aria-label="Float"><Icon name="float" size={6} /></button>
            <button aria-label="Close"><Icon name="close" size={6} /></button>
          </DockTitle>
          <ListBox>
            <ListTable>
              <thead><tr><th>Name</th></tr></thead>
              <tbody>
                {objects.map(([icon, label]) => <tr key={label}><td><Icon name={icon} />{label}</td></tr>)}
              </tbody>
            </ListTable>
            <HScroll $t={27}><Arrow $d="left" /><span /><Arrow $d="right" /></HScroll>
          </ListBox>
          <FilterBox>
            <legend>Filter</legend>
            <Select aria-label="Filter type"><option>&lt; All &gt;</option></Select>
            <Select aria-label="Filter group"><option>&lt; All &gt;</option></Select>
            <FilterFoot>
              <label><input type="checkbox" />Inverse</label>
              <SmallButton aria-label="Unlock"><Icon name="unlock" /></SmallButton>
              <SmallButton aria-label="Clear filter"><Icon name="close" /></SmallButton>
            </FilterFoot>
          </FilterBox>
        </Dock>

        <ResultDock>
          <DockTitle>
            <button aria-label="Float"><Icon name="float" size={6} /></button>
            <button aria-label="Close"><Icon name="close" size={6} /></button>
          </DockTitle>
          <Caption>Result selection</Caption>
          <ResultBox>
            <Branches $h={10}><Branch $open>Standard</Branch></Branches>
            <Branches $h={96}>{results.map((r, i) => <Leaf key={r} $sel={i === 0}>{r}</Leaf>)}</Branches>
            <Branches $h={47}>{categories.map(c => <Branch key={c}>{c}</Branch>)}</Branches>
          </ResultBox>
          <Caption>Plot options</Caption>
          <Plot>
            <label htmlFor="display">Step display:</label>
            <Select id="display"><option>Progress (loadcase)</option></Select>
            <label htmlFor="step">Step selection:</label>
            <Select id="step"><option>0.00% (FORMING)</option></Select>
          </Plot>
        </ResultDock>

        <Viewer>
          <Scene>
            <Forging />
            <Legend>
              <strong>Geometry</strong>
              <span><Swatch $c="#9a35e8" />PrfrmMod-conn-T1070</span>
              <span><Swatch $c="#00fdfd" />ConRod-BotDie-T200</span>
            </Legend>
            <StageInfo>
              <strong>Finishing - Results - 2</strong>
              <span>Sub-stage: FORMING</span>
              <span>Progress: 100.00%</span>
            </StageInfo>
          </Scene>
          <Player>
            <SmallButton aria-label="Play"><Icon name="play" /></SmallButton>
            <PlayGap />
            {['first', 'back', 'next', 'last'].map(n => <SmallButton key={n} aria-label={n}><Icon name={n} /></SmallButton>)}
            <PlayGap />
            <SmallButton $w={21} aria-label="Record"><Icon name="record" size={9} /><Arrow $d="down" /></SmallButton>
            <Slider><input type="range" aria-label="Progress" min={0} max={100} defaultValue={100} /></Slider>
            <ProgressSelect aria-label="Progress step"><option>Progress: 100.00% (FORMING)</option></ProgressSelect>
            <SmallButton aria-label="Player settings"><Icon name="tools" /></SmallButton>
          </Player>
        </Viewer>
      </Work>

      <JobBar>
        <Rule />
        <JobName>
          <Select aria-label="Process"><option>Finishing</option></Select>
          <Icon name="ok" />
        </JobName>
        <Bar $w={63}>100.00 %</Bar>
        <Bar $w={172}>job is finished based on stroke</Bar>
        <SmallButton $w={12} aria-label="Messages"><Caret as="span" /></SmallButton>
        <Rule /><Tools w={29} items={['docRun', 'stop']} /><Caret aria-label="Stop options" />
        <Tools w={29} items={['refresh', 'clip']} />
        <Rule /><Tools w={29} items={['broom', 'alert']} /><Caret aria-label="Alert options" />
        <Rule /><Tools w={15} items={['tools']} /><Caret aria-label="Tool options" /><Rule />
      </JobBar>
      <Status><span>Ready</span><span>NUM</span></Status>
    </Shell>
  );
}
